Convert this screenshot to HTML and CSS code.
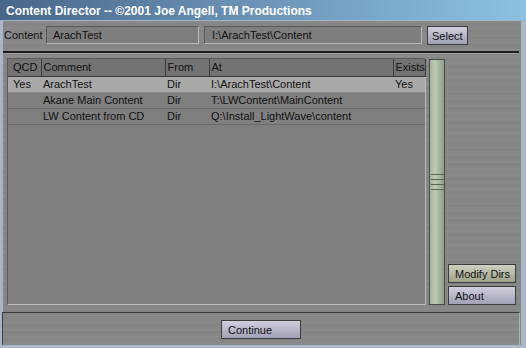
FILE: index.html
```html
<!DOCTYPE html>
<html lang="en">
<head>
    <meta charset="UTF-8">
    <title>Content Director</title>
    <link rel="stylesheet" href="styles.css">
</head>
<body>
    <div class="window">
        <div class="titlebar">Content Director -- ©2001 Joe Angell, TM Productions</div>
        <div class="panel">
            <div class="content-row">
                <span class="label">Content</span>
                <div class="field name">ArachTest</div>
                <div class="field path">I:\ArachTest\Content</div>
                <button class="btn lavender select">Select</button>
            </div>
            <div class="sep"></div>
            <div class="main">
                <div class="list">
                    <table>
                        <thead>
                            <tr>
                                <th class="c-qcd">QCD</th>
                                <th class="c-comment">Comment</th>
                                <th class="c-from">From</th>
                                <th class="c-at">At</th>
                                <th class="c-exists">Exists</th>
                            </tr>
                        </thead>
                        <tbody>
                            <tr class="selected">
                                <td class="c-qcd">Yes</td>
                                <td>ArachTest</td>
                                <td>Dir</td>
                                <td>I:\ArachTest\Content</td>
                                <td>Yes</td>
                            </tr>
                            <tr>
                                <td class="c-qcd"></td>
                                <td>Akane Main Content</td>
                                <td>Dir</td>
                                <td>T:\LWContent\MainContent</td>
                                <td></td>
                            </tr>
                            <tr>
                                <td class="c-qcd"></td>
                                <td>LW Content from CD</td>
                                <td>Dir</td>
                                <td>Q:\Install_LightWave\content</td>
                                <td></td>
                            </tr>
                        </tbody>
                    </table>
                </div>
                <div class="scrollbar">
                    <div class="grip">
                        <span></span><span></span><span></span><span></span>
                    </div>
                </div>
                <div class="side">
                    <button class="btn green">Modify Dirs</button>
                    <button class="btn lavender">About</button>
                </div>
            </div>
            <div class="footer">
                <button class="btn lavender continue">Continue</button>
            </div>
        </div>
    </div>
</body>
</html>
```

FILE: styles.css
```css
body {
    margin: 0;
    font-family: "Liberation Sans", Arial, sans-serif;
    font-size: 11px;
    color: #111;
    background: #878787;
}
.window {
    width: 526px;
    height: 348px;
    display: flex;
    flex-direction: column;
    overflow: hidden;
}
.titlebar {
    height: 21px;
    line-height: 22px;
    padding-left: 6px;
    color: #fff;
    font-weight: bold;
    font-size: 12px;
    background: linear-gradient(to right, #48678a, #6d95b8 50%, #8cc2e2);
    border-bottom: 1px solid #9fb3c6;
    box-sizing: border-box;
}
.panel {
    flex: 1;
    display: flex;
    flex-direction: column;
    border-left: 3px solid #a7b6c9;
    border-right: 5px solid #a9b9cc;
    border-bottom: 3px solid #a9b9cc;
    background-color: #878787;
    background-image: repeating-linear-gradient(180deg, rgba(255,255,255,0.03) 0 1px, transparent 1px 3px, rgba(0,0,0,0.03) 3px 4px, transparent 4px 7px);
}
.content-row {
    display: flex;
    align-items: flex-start;
    padding: 5px 0 0 1px;
    height: 19px;
}
.label {
    width: 42px;
    line-height: 18px;
}
.field {
    height: 18px;
    line-height: 17px;
    box-sizing: border-box;
    background: #7e7e7e;
    border-top: 1px solid #5a5a5a;
    border-left: 1px solid #5a5a5a;
    border-right: 1px solid #b8b8b8;
    border-bottom: 1px solid #b8b8b8;
}
.name {
    width: 153px;
    padding-left: 6px;
}
.path {
    width: 218px;
    margin-left: 5px;
    padding-left: 7px;
}
.btn {
    font-family: "Liberation Sans", Arial, sans-serif;
    font-size: 11px;
    color: #111;
    height: 19px;
    padding: 0 0 0 5px;
    text-align: left;
    border: 1px solid #3c3c3c;
    box-sizing: border-box;
    cursor: pointer;
}
.lavender {
    background: linear-gradient(#cfcfdc, #b3b3c6 60%, #a2a2b6);
}
.green {
    background: linear-gradient(#cdd0bf, #b1b5a0 60%, #9da28c);
}
.select {
    width: 41px;
    margin-left: 5px;
    padding-left: 4px;
}
.sep {
    margin-top: 6px;
    margin-right: 2px;
    border-top: 2px solid #1e1e1e;
    border-bottom: 1px solid #9c9c9c;
}
.main {
    height: 258px;
    display: flex;
    padding: 4px 0 0 4px;
    box-sizing: border-box;
    align-items: flex-start;
}
.list {
    width: 419px;
    height: 247px;
    box-sizing: border-box;
    background: #7f7f7f;
    border-top: 1px solid #5a5a5a;
    border-left: 1px solid #5a5a5a;
    border-right: 1px solid #bcbcbc;
    border-bottom: 1px solid #bcbcbc;
}
table {
    width: 417px;
    border-collapse: collapse;
    table-layout: fixed;
}
th {
    height: 17px;
    padding: 0 0 0 2px;
    font-weight: normal;
    text-align: left;
    background: #737373;
    border: 1px solid #3c3c3c;
    border-top: none;
    box-sizing: border-box;
}
th:first-child {
    border-left: none;
}
td {
    height: 16px;
    padding: 0 0 0 2px;
    box-sizing: border-box;
    white-space: nowrap;
    border-bottom: 1px solid #6b6b6b;
}
.c-qcd { width: 33px; padding-left: 5px; }
.c-comment { width: 124px; }
.c-from { width: 44px; }
.c-at { width: 184px; }
.c-exists { width: 32px; }
tr.selected td {
    background: #a9a9a9;
    border-bottom-color: #8a8a8a;
}
.scrollbar {
    width: 16px;
    height: 246px;
    margin: 1px 0 0 3px;
    box-sizing: border-box;
    border: 1px solid #4a4a4a;
    background: linear-gradient(to right, #a3b29c, #bfccb7 35%, #a9b8a2 65%, #8c9c86);
    display: flex;
    flex-direction: column;
}
.grip {
    margin-top: 114px;
    padding-left: 1px;
    display: flex;
    flex-direction: column;
    gap: 4px;
}
.grip span {
    width: 13px;
    height: 1px;
    background: #5a6756;
}
.side {
    width: 68px;
    height: 247px;
    margin-left: 3px;
    display: flex;
    flex-direction: column;
    justify-content: flex-end;
    gap: 3px;
}
.side .btn {
    width: 68px;
    padding-left: 6px;
}
.footer {
    flex: 1;
    display: flex;
    justify-content: center;
    padding-top: 7px;
    border-top: 1px solid #3a3a3a;
    border-left: 1px solid #3a3a3a;
    border-right: 1px solid #b0b0b0;
    margin-left: -1px;
    margin-right: 1px;
}
.continue {
    width: 80px;
    padding-left: 6px;
}
```
